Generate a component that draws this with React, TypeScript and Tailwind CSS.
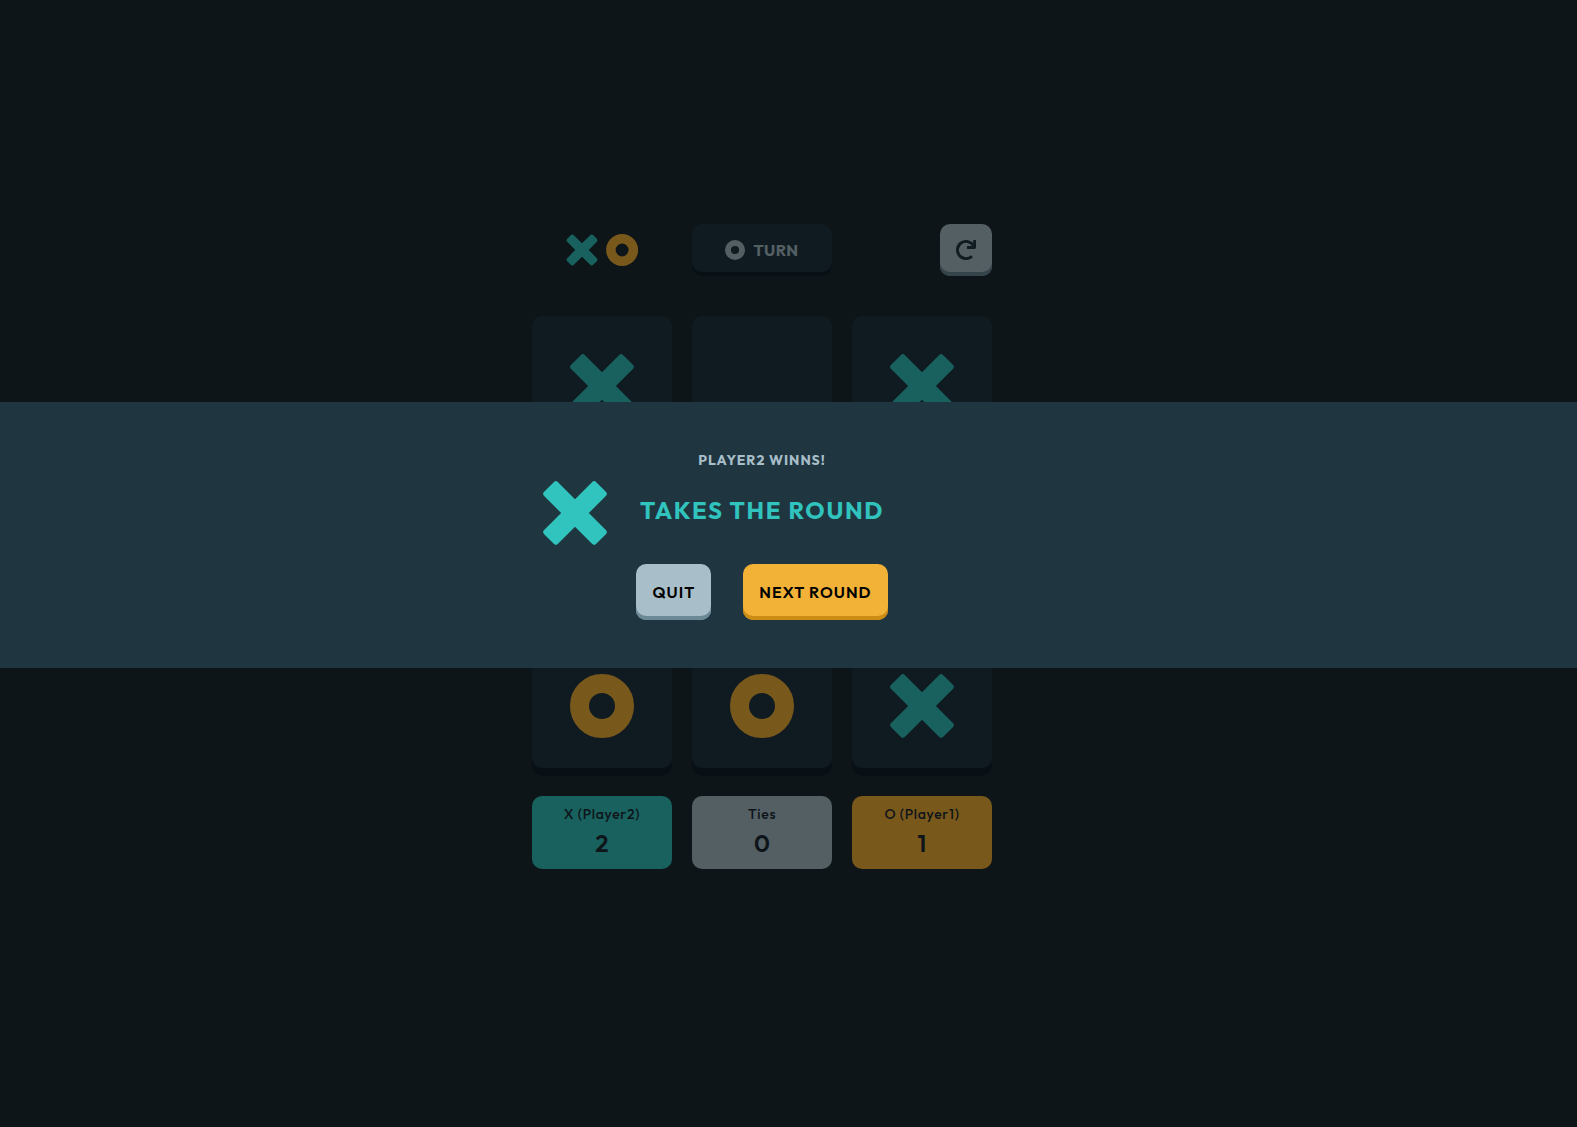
import React from "react";

type Mark = "x" | "o" | null;

const X_PATH =
  "M15.002 1.147 32 18.145 48.998 1.147a3 3 0 0 1 4.243 0l9.612 9.612a3 3 0 0 1 0 4.243L45.855 32l16.998 16.998a3 3 0 0 1 0 4.243l-9.612 9.612a3 3 0 0 1-4.243 0L32 45.855 15.002 62.853a3 3 0 0 1-4.243 0L1.147 53.24a3 3 0 0 1 0-4.243L18.145 32 1.147 15.002a3 3 0 0 1 0-4.243l9.612-9.612a3 3 0 0 1 4.243 0Z";

function XIcon({ className }: { className: string }) {
  return (
    <svg viewBox="0 0 64 64" className={className} fill="currentColor" aria-hidden="true">
      <path fillRule="evenodd" d={X_PATH} />
    </svg>
  );
}

function OIcon({ className }: { className: string }) {
  return (
    <svg viewBox="0 0 64 64" className={className} fill="none" stroke="currentColor" aria-hidden="true">
      <circle cx="32" cy="32" r="22.5" strokeWidth="19" />
    </svg>
  );
}

function Logo() {
  return (
    <svg viewBox="0 0 72 32" className="h-8 w-[72px]" aria-label="XO" role="img">
      <path
        fill="#31C3BD"
        stroke="#31C3BD"
        strokeWidth="5"
        strokeLinejoin="round"
        d="M6.3 3.2 16 12.8 25.7 3.2 28.8 6.3 19.2 16 28.8 25.7 25.7 28.8 16 19.2 6.3 28.8 3.2 25.7 12.8 16 3.2 6.3Z"
      />
      <circle cx="56.1" cy="16" r="11.25" fill="none" stroke="#F2B137" strokeWidth="9.5" />
    </svg>
  );
}

function RestartIcon() {
  return (
    <svg viewBox="0 0 20 20" className="size-5 text-[#1F3641]" fill="none" stroke="currentColor" aria-hidden="true">
      <path d="M17.4 5.6A8.6 8.6 0 1 0 16 16.2" strokeWidth="2.8" />
      <path d="M18.6 0V7.5H11" strokeWidth="2.8" strokeLinejoin="round" />
    </svg>
  );
}

const board: Mark[] = ["x", null, "x", "o", "x", null, "o", "o", "x"];

const scores = [
  { label: "X (Player2)", value: 2, color: "bg-[#31C3BD]" },
  { label: "Ties", value: 0, color: "bg-[#A8BFC9]" },
  { label: "O (Player1)", value: 1, color: "bg-[#F2B137]" },
];

export default function App() {
  return (
    <div className="flex min-h-screen items-center justify-center bg-[#1A2A33] pr-[53px] pb-[34px] font-['Outfit','Lato',sans-serif] text-[#1A2A33]">
      <main className="grid w-[460px] grid-cols-3 gap-5">
        <header className="col-span-3 mb-5 grid grid-cols-3 items-center gap-5">
          <div className="flex justify-center">
            <Logo />
          </div>
          <div className="flex h-[52px] items-center justify-center gap-2 rounded-[10px] bg-[#1F3641] font-bold tracking-wide text-[#A8BFC9] shadow-[inset_0_-4px_0_#10212A]">
            <OIcon className="size-5" />
            <span>TURN</span>
          </div>
          <button
            type="button"
            aria-label="Restart"
            className="flex size-[52px] items-center justify-center justify-self-end rounded-[10px] bg-[#A8BFC9] shadow-[inset_0_-4px_0_#6B8997]"
          >
            <RestartIcon />
          </button>
        </header>

        {board.map((mark, i) => (
          <button
            key={i}
            type="button"
            aria-label={`Cell ${i + 1}`}
            className="flex h-[140px] items-center justify-center rounded-[10px] bg-[#1F3641] shadow-[inset_0_-8px_0_#10212A]"
          >
            {mark === "x" && <XIcon className="size-16 text-[#31C3BD]" />}
            {mark === "o" && <OIcon className="size-16 text-[#F2B137]" />}
          </button>
        ))}

        {scores.map((s) => (
          <div
            key={s.label}
            className={`flex flex-col items-center rounded-[10px] pt-2 pb-[7px] ${s.color}`}
          >
            <span className="text-sm font-medium tracking-wider">{s.label}</span>
            <span className="text-2xl leading-[38px] font-semibold">{s.value}</span>
          </div>
        ))}
      </main>

      <div className="fixed inset-0 flex items-center bg-black/50 pb-[57px]">
        <section
          role="dialog"
          aria-label="Round result"
          className="flex w-full flex-col items-center bg-[#1F3641] py-12 pr-[53px] font-bold"
        >
          <p className="text-sm tracking-[1px] text-[#A8BFC9]">PLAYER2 WINNS!</p>
          <div className="mt-[11px] grid w-full grid-cols-[1fr_auto_1fr] items-center gap-[33px] text-[#31C3BD]">
            <XIcon className="size-16 justify-self-end" />
            <h1 className="pb-1.5 text-2xl tracking-[0.07em]">TAKES THE ROUND</h1>
          </div>
          <div className="mt-[19px] flex gap-8 font-semibold tracking-[0.0625em] text-black">
            <button
              type="button"
              className="h-14 rounded-[10px] bg-[#A8BFC9] px-4 shadow-[inset_0_-4px_0_#6B8997]"
            >
              QUIT
            </button>
            <button
              type="button"
              className="h-14 rounded-[10px] bg-[#F2B137] px-4 shadow-[inset_0_-4px_0_#CC8B13]"
            >
              NEXT ROUND
            </button>
          </div>
        </section>
      </div>
    </div>
  );
}
